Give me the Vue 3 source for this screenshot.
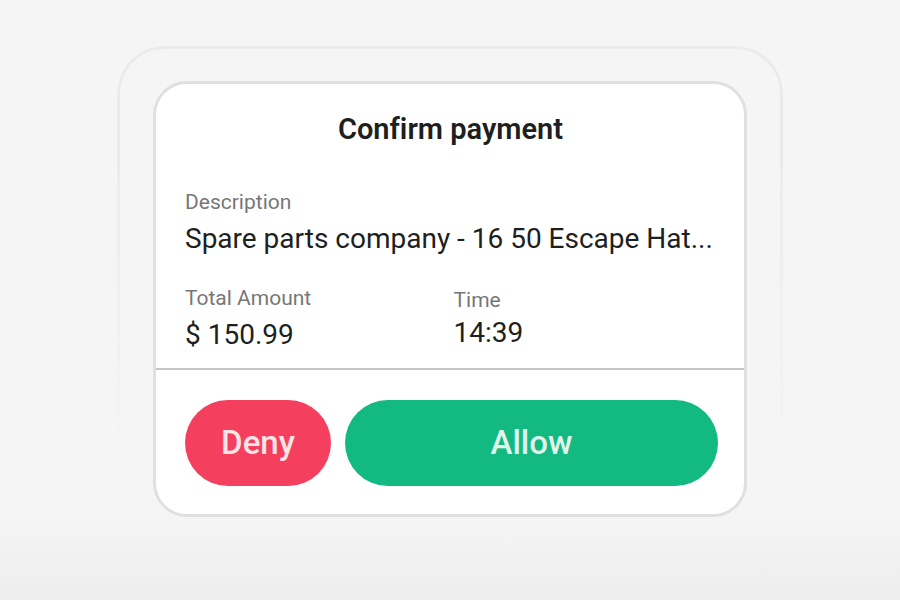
<script setup>
const payment = {
  description: 'Spare parts company - 16 50 Escape Hat...',
  amount: '$ 150.99',
  time: '14:39',
}
</script>

<template>
  <main class="page">
    <div class="frame">
      <section class="card" aria-labelledby="title">
        <div class="body">
          <h1 id="title">Confirm payment</h1>
          <dl class="details">
            <div class="field wide">
              <dt>Description</dt>
              <dd>{{ payment.description }}</dd>
            </div>
            <div class="field">
              <dt>Total Amount</dt>
              <dd>{{ payment.amount }}</dd>
            </div>
            <div class="field compact">
              <dt>Time</dt>
              <dd>{{ payment.time }}</dd>
            </div>
          </dl>
        </div>
        <div class="actions">
          <button type="button" class="deny">Deny</button>
          <button type="button" class="allow">Allow</button>
        </div>
      </section>
    </div>
  </main>
</template>

<style>
body {
  margin: 0;
  background: #f5f5f5;
}
</style>

<style scoped>
.page {
  box-sizing: border-box;
  min-height: 100vh;
  padding: 46px 24px 48px;
  background: linear-gradient(to top, #ededed, #f5f5f5 84px);
  font-family: Roboto, "Liberation Sans", sans-serif;
  color: #1d1f21;
}
.frame {
  box-sizing: border-box;
  max-width: 666px;
  margin: 0 auto;
  padding: 35px 36px 0;
  border-radius: 48px;
  position: relative;
}
.frame::before {
  content: "";
  position: absolute;
  inset: 0;
  border: 3px solid #ebebeb;
  border-radius: 48px;
  mask-image: linear-gradient(#000 25%, transparent 86%);
  pointer-events: none;
}
.card {
  position: relative;
  border: 3px solid #e0e0de;
  border-radius: 34px;
  background: #fff;
  overflow: hidden;
}
.body {
  padding: 27px 28px 15px 29px;
  border-bottom: 2px solid #c6c6c6;
}
h1 {
  margin: 0 0 41px;
  font-size: 29px;
  line-height: 36px;
  font-weight: 600;
  font-variant-ligatures: none;
  text-align: center;
}
.details {
  display: grid;
  grid-template-columns: 1fr 1fr;
  gap: 27px 6px;
  margin: 0;
}
.wide {
  grid-column: 1 / -1;
}
dt {
  font-size: 21px;
  line-height: 28px;
  color: #777;
}
dd {
  margin: 5px 0 0;
  font-size: 28px;
  line-height: 36px;
  white-space: nowrap;
}
.compact {
  padding-top: 2px;
}
.compact dd {
  margin-top: 1px;
}
.actions {
  display: flex;
  gap: 14px;
  padding: 30px 26px 28px 29px;
}
button {
  height: 86px;
  padding: 0;
  border: 0;
  border-radius: 43px;
  font: 500 33px/40px Roboto, "Liberation Sans", sans-serif;
  cursor: pointer;
}
.deny {
  flex: 0 0 146px;
  background: #f4405e;
  color: #fbe4e6;
}
.allow {
  flex: 1;
  background: #12b981;
  color: #e1f3eb;
}
</style>
